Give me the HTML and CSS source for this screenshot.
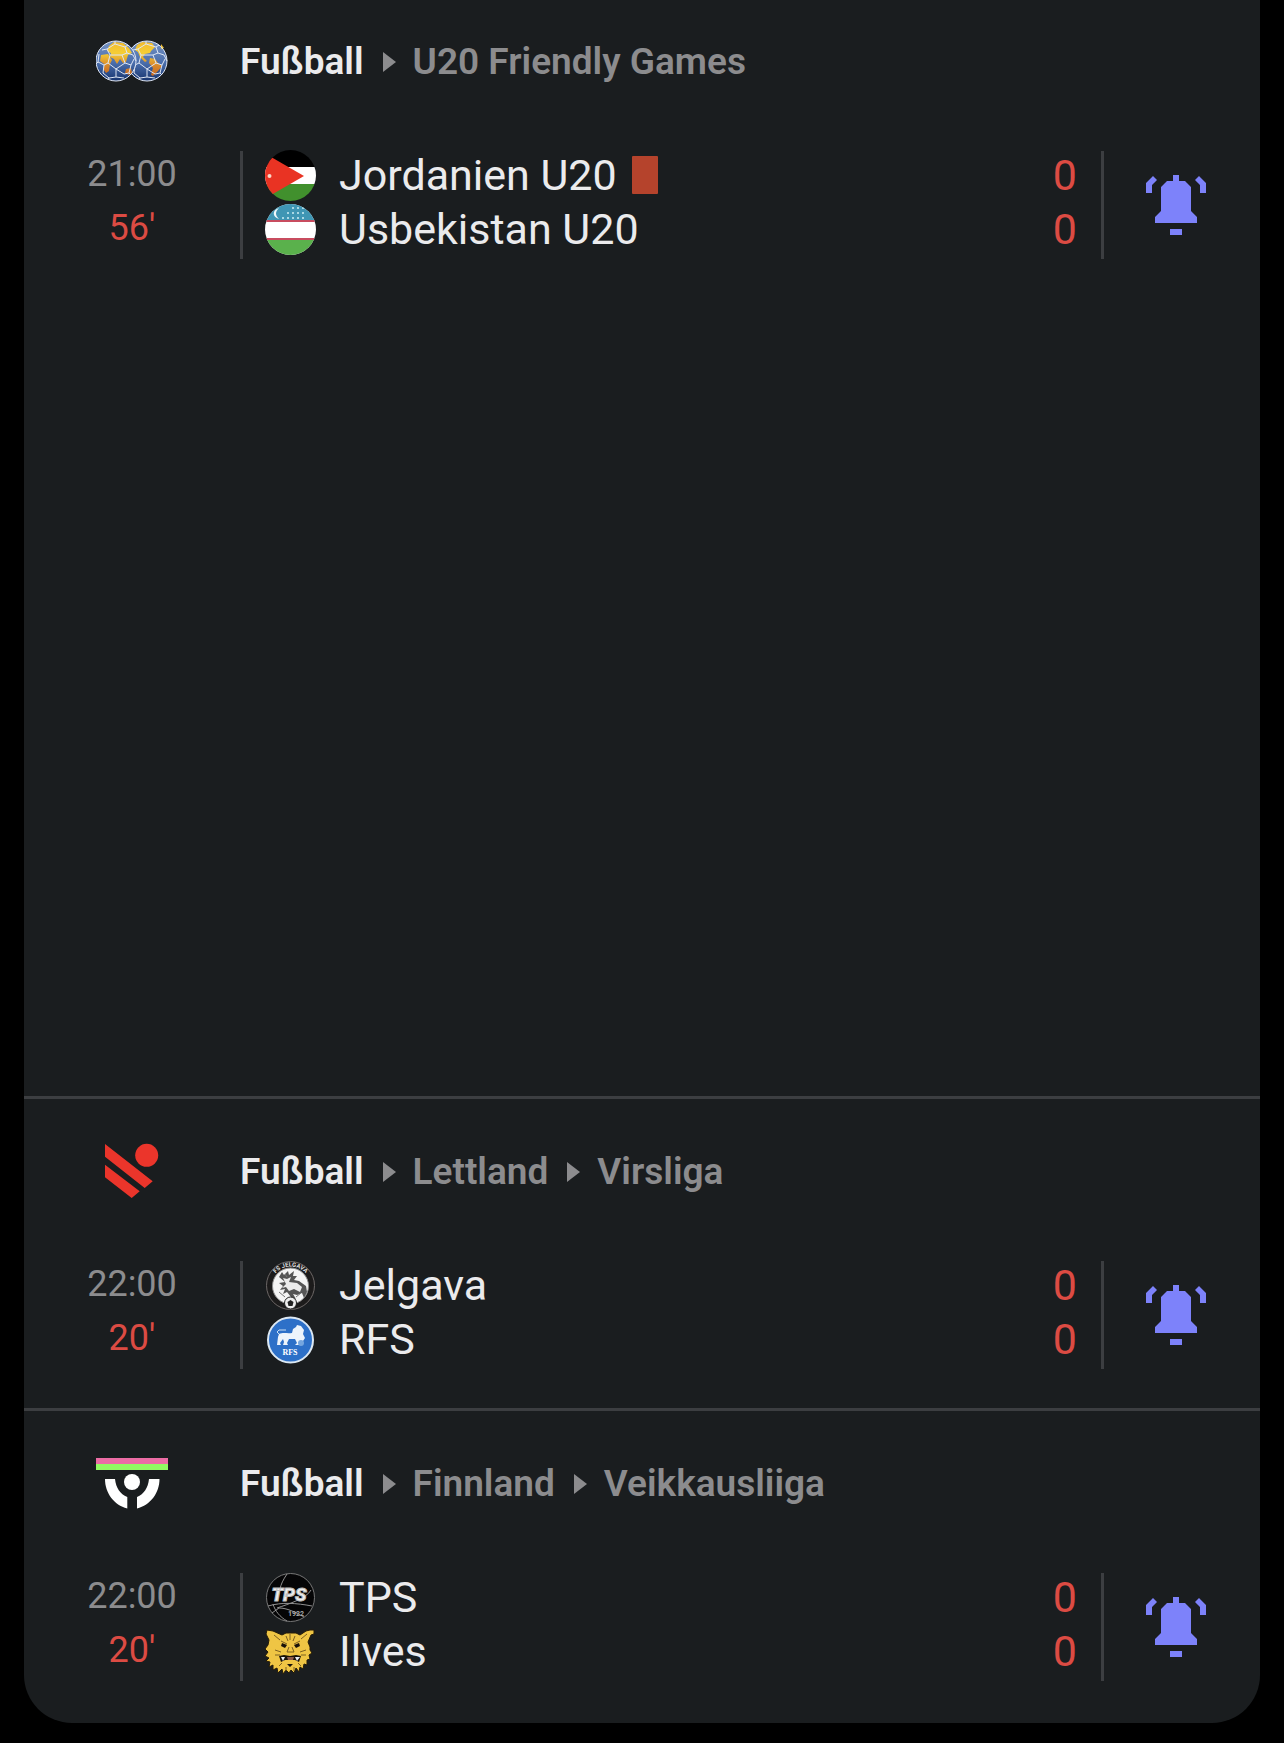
FILE: index.html
```html
<!DOCTYPE html>
<html lang="de">
<head>
<meta charset="utf-8">
<meta name="viewport" content="width=device-width, initial-scale=1">
<title>Fußball Livescores</title>
<link rel="stylesheet" href="styles.css">
</head>
<body>
<svg class="defs" width="0" height="0" aria-hidden="true">
  <symbol id="bell" viewBox="0 0 60 60">
    <path d="M27 0h6v6h6l6 6v24l6 6v6H9v-6l6-6V12l6-6h6zM24 54h12v6H24zM7 1l4 4-5 5v8H0V8zM53 1l-4 4 5 5v8h6V8z"/>
  </symbol>
  <symbol id="seams" viewBox="0 0 42 42">
    <path d="M15 15h12l3 8-9 6-8-6zM15 15l-3-6 8-5 10 3 2 6-5 2M12 9 7 10M20 4V1M30 7l3-2M32 13l6 2 3 6M30 23l6 2 3-6M36 25l-2 8-5 1-8-5M34 33l2 2M21 29v8l-7 1-6-5 1-8 4-2M21 37l8 1M14 38l-1 2M9 25l-6-3 1-8M1 24l2-2"/>
  </symbol>
</svg>
<main class="card">
  <section class="league">
    <header class="league-head">
      <svg class="league-logo" viewBox="0 0 72 72" aria-hidden="true">
        <defs>
          <linearGradient id="sea" x1="0" y1="0" x2="0" y2="1"><stop offset="0" stop-color="#7693c4"/><stop offset=".55" stop-color="#4a6eac"/><stop offset="1" stop-color="#17346f"/></linearGradient>
          <linearGradient id="land" gradientUnits="userSpaceOnUse" x1="0" y1="16" x2="0" y2="56"><stop offset="0" stop-color="#f2b92c"/><stop offset=".3" stop-color="#f5ce35"/><stop offset=".6" stop-color="#d98a2c"/><stop offset="1" stop-color="#b9561f"/></linearGradient>
        </defs>
        <circle cx="51" cy="36" r="20" fill="url(#sea)"/>
        <path fill="url(#land)" d="M41 20l5-3 10 1 3 4-4 4-1 2-5 1-2 3 4 4-2 1-5-5-2-5-3-2zM54 33l5 1 3 4 4 3-4 5-5 5-2-1 2-7-4-5zM65 19l3 4-3 1z"/>
        <use class="seam" href="#seams" x="30" y="15" width="42" height="42"/>
        <circle cx="51" cy="36" r="20" class="rim"/>
        <circle cx="20" cy="36" r="20" fill="url(#sea)"/>
        <path fill="url(#land)" d="M13 21l5-4 9 1 6 5 3 5-4 2-2 7-3 1-3-4-3 5-3-5-4-2 1-4-4-2zM5 30l7-1 4 6-2 4-1 7-3 2-2-3v-6l-4-3zM30 44l5-1 1 5-3 2-4-2z"/>
        <use class="seam" href="#seams" x="-1" y="15" width="42" height="42"/>
        <circle cx="20" cy="36" r="20" class="rim"/>
      </svg>
      <nav class="crumbs"><a class="sport" href="#fussball">Fußball</a><a href="#u20">U20 Friendly Games</a></nav>
    </header>
    <article class="match">
      <div class="times"><time>21:00</time><span class="live">56'</span></div>
      <ul class="teams">
        <li>
          <svg class="crest" viewBox="0 0 51 51" aria-hidden="true">
            <clipPath id="disc"><circle cx="25.500" cy="25.500" r="25.500"/></clipPath>
            <g clip-path="url(#disc)"><path fill="#000" d="M0 0h51v17H0z"/><path fill="#fff" d="M0 17h51v17H0z"/><path fill="#41902d" d="M0 34h51v17H0z"/><path fill="#e93323" d="M-1 3l40 23L-1 49z"/><circle cx="4.500" cy="26" r="2" fill="#fbd8c8"/></g>
          </svg>
          <span>Jordanien U20</span><i class="red-card" role="img" aria-label="Rote Karte"></i><b class="score">0</b>
        </li>
        <li>
          <svg class="crest" viewBox="0 0 51 51" aria-hidden="true">
            <g clip-path="url(#disc)"><path fill="#fff" d="M0 0h51v51H0z"/><path fill="#3f96b4" d="M0 0h51v17H0z"/><path fill="#5ab14c" d="M0 35h51v16H0z"/><path fill="#c84c5f" d="M0 16h51v2H0zM0 34h51v2H0z"/><path fill="#eef8fb" d="M14 4c-7 2-7 9 0 11-4-4-4-7 0-11z"/><path stroke="#a9d8e4" stroke-width="2" stroke-dasharray="2 3" d="M27 4h12M22 9h17M17 14h22"/></g>
          </svg>
          <span>Usbekistan U20</span><b class="score">0</b>
        </li>
      </ul>
      <button class="alert" type="button" aria-label="Benachrichtigungen"><svg viewBox="0 0 60 60" aria-hidden="true"><use href="#bell"/></svg></button>
    </article>
    <div class="ad-slot"></div>
  </section>

  <section class="league">
    <header class="league-head">
      <svg class="league-logo" viewBox="0 0 72 72" aria-hidden="true">
        <path fill="#eb352b" d="M9 9l47.700 37.300-8 6.700L9 21.700zM9 29.700l34.700 26.600-8 6.700L9 42.300z"/><circle cx="50.700" cy="20.300" r="11.500" fill="#eb352b"/>
      </svg>
      <nav class="crumbs"><a class="sport" href="#fussball">Fußball</a><a href="#lettland">Lettland</a><a href="#virsliga">Virsliga</a></nav>
    </header>
    <article class="match">
      <div class="times"><time>22:00</time><span class="live">20'</span></div>
      <ul class="teams">
        <li>
          <svg class="crest" viewBox="0 0 51 51" aria-hidden="true">
            <circle cx="25.500" cy="25.500" r="25" fill="#1c1b1b"/><circle cx="25.500" cy="25.500" r="24" fill="none" stroke="#6c6868"/><circle cx="25.500" cy="26" r="18" fill="#f4f4f4" stroke="#8c8c8c"/>
            <path id="arc" fill="none" d="M7 19a20 20 0 0 1 37 0"/><text class="arc-label"><textPath href="#arc" startOffset="50%" text-anchor="middle">FS JELGAVA</textPath></text>
            <path fill="#555" d="M14 17l3-5 2 3 4-4 1 4 5-4-1 5 4 0-3 4 5 1 7 5 1 6-3 6-2-5-5 2-4-1 3 5-5-2-4-5-4 2 2-5-5 1 3-4-4-3 6-1z"/>
            <path fill="#ececec" d="M18 18l4 1 4-2-2 5 8 1 5 4-2 5-6-3-5 2-3-4-4 1 4-4z"/><path fill="none" stroke="#777" d="M14 32l6 5M36 33l-5 4M20 14l2 3"/>
            <circle cx="25.500" cy="43" r="6" fill="#eee" stroke="#222"/><path fill="#222" d="M25.500 40l3 2-1 4h-4l-1-4z"/>
          </svg>
          <span>Jelgava</span><b class="score">0</b>
        </li>
        <li>
          <svg class="crest" viewBox="0 0 51 51" aria-hidden="true">
            <circle cx="25.500" cy="26" r="22.500" fill="#2d70c8" stroke="#dce8f3" stroke-width="2"/>
            <path fill="#edf4fb" d="M14 20c5-2 8 0 13-1l1-4 3-2 1-2 4 1 3 4-1 4 2 4-2 3-3 0v4h-5l2-2-2-4-6 0-2 4 1 2h-5l1-3-1-3-3 4 1 2h-4l1-8z"/><path fill="none" stroke="#c9def2" d="M14 20l-2-2 2-2h7"/><circle cx="36" cy="29" r="3" fill="#75a6df"/>
            <text class="rfs-label" x="25" y="41" text-anchor="middle">RFS</text>
          </svg>
          <span>RFS</span><b class="score">0</b>
        </li>
      </ul>
      <button class="alert" type="button" aria-label="Benachrichtigungen"><svg viewBox="0 0 60 60" aria-hidden="true"><use href="#bell"/></svg></button>
    </article>
  </section>

  <section class="league">
    <header class="league-head">
      <svg class="league-logo" viewBox="0 0 72 72" aria-hidden="true">
        <path fill="#ec6ca5" d="M0 11h72v6H0z"/><path fill="#92fa62" d="M0 17h72v6H0z"/>
        <circle cx="36" cy="35" r="8" fill="#fff"/><path fill="#fff" d="M9 32h10c1 9 5 15 12.300 18v11.500C18 58 9 46 9 32zM63.500 32H53c-1 9-5 15-12 18v11.500C54.500 58 63.500 46 63.500 32z"/>
      </svg>
      <nav class="crumbs"><a class="sport" href="#fussball">Fußball</a><a href="#finnland">Finnland</a><a href="#veikkausliiga">Veikkausliiga</a></nav>
    </header>
    <article class="match">
      <div class="times"><time>22:00</time><span class="live">20'</span></div>
      <ul class="teams">
        <li>
          <svg class="crest" viewBox="0 0 51 51" aria-hidden="true">
            <circle cx="25.500" cy="25.500" r="24" fill="#050506" stroke="#777"/>
            <path fill="none" stroke="#909090" d="M22 2c-4 6-6 10-7 15M3 34c14-4 28-3 44 0M8 32c2 7 7 13 14 17M14 36c8 0 16 4 25 9M14 36l-7 5M46 18c-4 8-22 14-34 18"/>
            <text class="tps-label" x="24" y="29" text-anchor="middle">TPS</text><text class="year-label" x="31" y="44" text-anchor="middle">1922</text>
          </svg>
          <span>TPS</span><b class="score">0</b>
        </li>
        <li>
          <svg class="crest" viewBox="0 0 51 51" aria-hidden="true">
            <path fill="#efc544" stroke="#241b08" d="M2 4l6 1 9 4 4-2h10l4 2 6-4 4-1h4v4l-3 1-3 7 2 5 0 3 2 3-3 2 1 4-3 1 0 5-3-1-1 5-3-2-1 5-3-4-2 5-3-3-2 3-3-3-3 4-1-5-4 4-1-5-4 2 0-5-4 2 1-5-4-1 3-3-4-2 3-4-3-3 3-4 1-5-3-6z"/>
            <path fill="none" stroke="#7d6020" d="M9 9l6 5M42 8l-6 5M21 10l2 5M30 10l-2 5M25 8v6M16 15l6 3M35 15l-6 3M10 24l6 2M41 24l-6 2M10 29l5 0M41 29l-5 0M24 21l-2 5h7l-2-5M14 40l3-3M36 40l-3-3M21 41v4M29 41v4"/>
            <path fill="#19120a" d="M17 17l5 2-2 3-4-2zM34 17l-5 2 2 3 4-2zM14 30l5-1 6 1 6-1 5 1-2 6-4-2H20l-4 2zM22 38h6l-3 3z"/><path fill="#e9edf2" d="M16 31l2 4 2-4zM35 31l-3 4-2-4z"/><path fill="#8e5b4b" d="M22 31h7l-1 3h-5z"/>
          </svg>
          <span>Ilves</span><b class="score">0</b>
        </li>
      </ul>
      <button class="alert" type="button" aria-label="Benachrichtigungen"><svg viewBox="0 0 60 60" aria-hidden="true"><use href="#bell"/></svg></button>
    </article>
  </section>
</main>
</body>
</html>
```
FILE: styles.css
```css
* { box-sizing: border-box; }

body {
  margin: 0;
  padding: 0 24px 20px;
  background: #000;
  color: #ebebed;
  font-family: Roboto, "Liberation Sans", sans-serif;
}

.defs { position: absolute; }

.card {
  overflow: hidden;
  background: #1a1d1f;
  border-radius: 0 0 48px 48px;
}

.league {
  padding: 36px 0 39px;
}

.league:first-child { padding: 25px 0 0; }

.league:last-child { padding-bottom: 42px; }

.league + .league { border-top: 3px solid #3c3e41; }

.league-head {
  display: grid;
  grid-template-columns: 216px 1fr;
  align-items: center;
  margin-bottom: 54px;
}

.league-logo {
  width: 72px;
  height: 72px;
  justify-self: center;
}

.rim, .seam {
  fill: none;
  stroke: #dfe6f3;
  stroke-width: 1px;
}

.crumbs {
  display: flex;
  align-items: center;
  padding-top: 2px;
  font-size: 37px;
  line-height: 54px;
  font-weight: 600;
}

.crumbs a {
  display: flex;
  align-items: center;
  color: #8c8c8e;
  text-decoration: none;
}

.crumbs .sport { color: #ebebed; }

.crumbs a + a::before {
  content: "";
  margin: 0 17px 0 19px;
  border-left: 13px solid #8c8c8e;
  border-top: 10px solid transparent;
  border-bottom: 10px solid transparent;
}

.match {
  display: grid;
  grid-template-columns: 216px 1fr 156px;
  height: 108px;
}

.times {
  display: flex;
  flex-direction: column;
  align-items: center;
  margin-top: -4px;
  color: #8c8c8e;
  font-size: 36px;
  line-height: 54px;
}

.live, .score { color: #dc4b43; }

.teams {
  margin: 0;
  padding: 0 24px 0 22px;
  border: solid #3c3e41;
  border-width: 0 3px;
  list-style: none;
  font-size: 43px;
  line-height: 54px;
}

.teams li {
  display: flex;
  align-items: center;
  height: 54px;
  margin-top: -3px;
}

.teams li + li { margin-top: 0; }

.crest {
  width: 51px;
  height: 51px;
  margin-right: 23px;
}

.arc-label { fill: #ddd; font-size: 6px; font-weight: 700; }
.rfs-label { fill: #fff; font: 700 8px "Liberation Serif", serif; }
.tps-label { fill: #eee; stroke: #bbb; font-size: 19px; font-weight: 900; font-style: italic; }
.year-label { fill: #aaa; font-size: 7px; font-weight: 700; }

.red-card {
  width: 26px;
  height: 38px;
  margin-left: 15px;
  border-radius: 1px;
  background: #b5432c;
}

.score {
  margin-left: auto;
  font-weight: 400;
}

.alert {
  display: flex;
  align-items: center;
  justify-content: center;
  margin-right: 12px;
  padding: 0;
  border: 0;
  background: none;
  cursor: pointer;
}

.alert svg {
  width: 60px;
  height: 60px;
  fill: #7d82fa;
}

.ad-slot { height: 837px; }
```
